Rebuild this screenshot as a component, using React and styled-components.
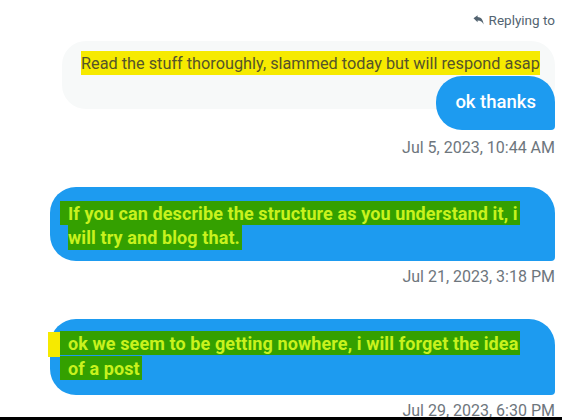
import React from "react";
import styled, { createGlobalStyle } from "styled-components";

const Global = createGlobalStyle`
  html, body { margin: 0; padding: 0; background: #fff; }
  * { box-sizing: border-box; }
`;

const Page = styled.div`
  position: relative;
  width: 562px;
  height: 420px;
  overflow: hidden;
  background: #fff;
  display: flex;
  flex-direction: column;
  padding: 10px 7px 0 0;
  font-family: Roboto, "Liberation Sans", Arial, sans-serif;
`;

const ReplyRow = styled.div`
  align-self: flex-end;
  display: flex;
  align-items: center;
  gap: 5px;
  height: 20px;
  font-size: 13.5px;
  color: #536471;
`;

const QuoteBubble = styled.div`
  margin: 12px 0 0 62px;
  height: 70px;
  padding: 10px 12px 0 19px;
  background: #f7f9f9;
  border-radius: 24px;
  font-size: 16.3px;
  line-height: 24px;
  white-space: nowrap;
`;

const YellowMark = styled.span`
  background: #f6ea00;
  color: #55542a;
  padding: 2.5px 0;
`;

const Bubble = styled.div`
  align-self: flex-end;
  margin-top: ${(p) => p.$top}px;
  ${(p) => (p.$left ? `margin-left: ${p.$left}px; align-self: stretch;` : "")}
  padding: ${(p) => p.$pad};
  min-height: ${(p) => p.$h || 0}px;
  display: flex;
  align-items: center;
  background: #1d9bf0;
  color: #fff;
  border-radius: 26px 26px 4px 26px;
  font-size: 18.5px;
  font-weight: 500;
  line-height: 24.5px;
`;

const BubbleText = styled.div`
  font-size: 18px;
  font-weight: 700;
  letter-spacing: 0.1px;
  white-space: nowrap;
`;

const GreenMark = styled.span`
  background: #34a000;
  color: #c8f21e;
  padding: 1.7px 2px 1.7px ${(p) => (p.$lead ? 8 : 0)}px;
  margin-left: ${(p) => (p.$lead ? -8 : 0)}px;
`;

const YellowTab = styled.span`
  display: inline-block;
  vertical-align: -7px;
  width: 12px;
  height: 25px;
  margin: 0 8px 0 -20px;
  background: #f6ea00;
`;

const Time = styled.div`
  align-self: flex-end;
  margin-top: ${(p) => p.$top}px;
  font-size: 16px;
  line-height: 18px;
  color: #6e767d;
  white-space: nowrap;
`;

const BottomBar = styled.div`
  position: absolute;
  left: 0;
  right: 0;
  bottom: 0;
  height: 3px;
  background: #000;
`;

const ReplyIcon = () => (
  <svg width="11" height="10" viewBox="0 0 11 10" aria-hidden="true">
    <path
      d="M0.5 3.2 L4.6 0.2 L4.6 2 C7.8 2.1 10.2 4.3 10.6 9.6 C9.4 6.8 7.6 5.6 4.6 5.5 L4.6 7.2 Z"
      fill="#536471"
    />
  </svg>
);

export default function App() {
  return (
    <>
      <Global />
      <Page>
        <ReplyRow>
          <ReplyIcon />
          <span>Replying to</span>
        </ReplyRow>
        <QuoteBubble>
          <YellowMark>
            Read the stuff thoroughly, slammed today but will respond asap
          </YellowMark>
        </QuoteBubble>
        <Bubble $top={-33} $h={54} $pad="0 19px">
          ok thanks
        </Bubble>
        <Time $top={9}>Jul 5, 2023, 10:44 AM</Time>

        <Bubble $top={30} $left={50} $pad="16px 18px 11px 18px">
          <BubbleText>
            <GreenMark $lead>
              If you can describe the structure as you understand it, i
            </GreenMark>
            <br />
            <GreenMark>will try and blog that.</GreenMark>
          </BubbleText>
        </Bubble>
        <Time $top={7}>Jul 21, 2023, 3:18 PM</Time>

        <Bubble $top={33} $left={50} $pad="14px 18px 15px 18px">
          <BubbleText>
            <YellowTab />
            <GreenMark $lead>
              ok we seem to be getting nowhere, i will forget the idea
            </GreenMark>
            <br />
            <GreenMark $lead>of a post</GreenMark>
          </BubbleText>
        </Bubble>
        <Time $top={7}>Jul 29, 2023, 6:30 PM</Time>
        <BottomBar />
      </Page>
    </>
  );
}
